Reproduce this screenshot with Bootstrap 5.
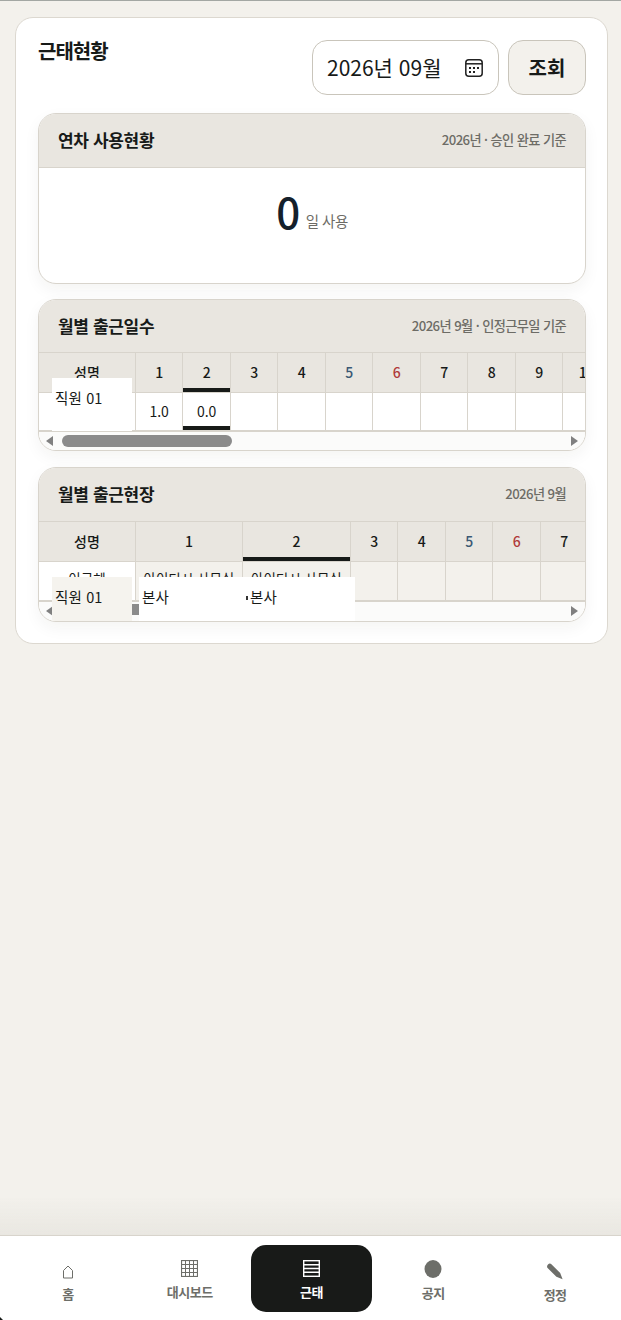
<!DOCTYPE html>
<html lang="ko"><head><meta charset="utf-8">
<link rel="stylesheet" href="https://cdn.jsdelivr.net/npm/bootstrap@5.3.0/dist/css/bootstrap.min.css">
<style>
html,body{height:100%}
body{font-family:"Noto Sans CJK KR","Noto Sans",sans-serif;background:#f3f1ec;color:#171a18;border-top:1px solid #a3a7a3;overflow:hidden;height:1320px;letter-spacing:-.03em}
.page-wrap{padding:16px 13px 0 15px}
.main-panel{background:#fff;border:1px solid #dcd8d0;border-radius:18px;padding:22px 21px 22px 22px;height:627px}
.top-row{height:55px;margin-bottom:18px}
.page-title{font-size:20px;font-weight:700;line-height:22px;margin:0;letter-spacing:-.05em}
.month-box{width:187px;height:55px;border:1px solid #c9c5bb;border-radius:15px;padding:0 15px 0 14px;font-size:21px;background:#fff;letter-spacing:0}
.search-btn{width:78px;height:55px;border:1px solid #c9c5bb;border-radius:15px;background:#f3f1ec;font-size:20px;font-weight:700;color:#171a18;padding:0;margin-left:9px}
.sub-card{position:relative;border:1px solid #d8d4cc;border-radius:18px;overflow:hidden;background:#fff;box-shadow:0 6px 16px rgba(40,35,20,.05);margin-bottom:15px}
.sub-card.gap-lg{margin-bottom:16px}
.sub-head{height:53.5px;background:#e9e6e0;padding:0 19px;border-bottom:1px solid #d8d4cc}
.sub-head.head-s{height:52.5px}
.sub-head.head-l{height:54px}
.sub-title{font-size:17px;font-weight:700;margin:0;letter-spacing:-.02em}
.sub-note{font-size:13.2px;font-weight:500;color:#6d6c66;letter-spacing:-.045em}
.leave-body{height:115.5px;padding-top:18px}
.big-num{font-size:42px;line-height:50px;font-weight:500;color:#14202b}
.big-unit{font-size:14.5px;color:#6d6c66;margin-left:6px;position:relative;top:-2px}
.grid-table{table-layout:fixed;border-collapse:collapse;margin:0;width:max-content;font-size:14px;letter-spacing:0}
.grid-table th,.grid-table td{border:1px solid #d8d4cc;text-align:center;vertical-align:middle;padding:0}
.grid-table th{height:39.5px}
.grid-table td{height:39px}
.grid-table td.row-s{height:38px}
.grid-table tr>:first-child{border-left:0}
.grid-table th{background:#e9e6e0;font-weight:500;border-top:0}
.grid-table .name-col{font-size:14px;font-weight:500;width:96.4px}
.w-day{width:47.5px}
.w-site{width:107px}
.w-site-b{width:108px}
.wk-sat{color:#3a5874}
.wk-sun{color:#b03a3a}
.today-head{box-shadow:inset 0 -4px 0 #171a18}
.today-cell{box-shadow:inset 0 -4px 0 #171a18}
.muted-cell{background:#f3f1ec}
.site-cell{font-size:13.5px;line-height:14px;overflow:hidden;padding-top:9px!important;white-space:nowrap;vertical-align:top!important}
.clip-wrap{overflow:hidden}
.fake-bar{height:20px;background:#fbfbfa;border-top:1px solid #d8d4cc;padding:0 7px}
.fake-bar.bar-short{height:19px}
.arrow-l,.arrow-r{width:0;height:0;border-top:5px solid transparent;border-bottom:5px solid transparent}
.arrow-l{border-right:7px solid #808080}
.arrow-r{border-left:7px solid #808080}
.bar-track{flex:1;padding:0 9px}
.bar-thumb{height:12px;border-radius:6px;background:#8b8b8b}
.mask{position:absolute;font-size:14.5px;color:#171a18;padding-left:3px;letter-spacing:.01em;line-height:20px}
.mask-one{left:13px;top:78px;width:80px;height:53px;background:#fff;padding-top:10px}
.mask-a{left:13px;top:109px;width:80px;height:45px;background:#f5f3ee;padding-top:10px}
.mask-t{left:93px;top:136px;width:7px;height:11px;background:#8b8b8b;padding:0}
.mask-b{left:100px;top:109px;width:108px;height:45px;background:#fff;padding-top:10px}
.mask-c{left:208px;top:109px;width:108px;height:45px;background:#fff;padding-top:10px}
.mask-dot{left:207px;top:128px;width:2px;height:4px;background:#333;padding:0}
.bottom-nav{position:fixed;left:0;right:0;bottom:0;height:85px;background:#fff;border-top:1px solid #d8d4cc;padding:9px 5px 8px 7px}
.nav-fade{position:fixed;left:0;right:0;bottom:85px;height:38px;background:linear-gradient(to bottom,rgba(233,231,225,0),#e9e7e1)}
.nav-cell{flex:1 1 0;color:#6d6e69;font-size:13px;font-weight:600;text-decoration:none;border-radius:15px;padding-top:3px}
.nav-cell.active-cell{background:#181a18;color:#fff}
.nav-low{padding-top:9px}
.nav-lbl{line-height:17px;margin-top:6px;letter-spacing:-.04em}
.corner-bit{position:fixed;left:0;bottom:0;width:3px;height:3px;background:#171a18;clip-path:polygon(0 0,100% 100%,0 100%)}
</style></head>
<body>
<div class="page-wrap">
<div class="main-panel">
  <div class="d-flex justify-content-between top-row">
    <h1 class="page-title">근태현황</h1>
    <div class="d-flex">
      <div class="month-box d-flex align-items-center justify-content-between">
        <span>2026년 09월</span>
        <svg width="18" height="18" viewBox="0 0 18 18" fill="none" stroke="#222" stroke-width="1.5"><rect x=".8" y=".8" width="16.4" height="16.4" rx="3"/><path d="M.8 4.8h16.4"/><g fill="#222" stroke="none"><rect x="4" y="8" width="2" height="2"/><rect x="8" y="8" width="2" height="2"/><rect x="12" y="8" width="2" height="2"/><rect x="4" y="12" width="2" height="2"/><rect x="8" y="12" width="2" height="2"/></g></svg>
      </div>
      <button class="search-btn" type="button">조회</button>
    </div>
  </div>

  <div class="sub-card">
    <div class="sub-head d-flex justify-content-between align-items-center">
      <h2 class="sub-title">연차 사용현황</h2><span class="sub-note">2026년 · 승인 완료 기준</span>
    </div>
    <div class="leave-body text-center"><span class="big-num">0</span><span class="big-unit">일 사용</span></div>
  </div>

  <div class="sub-card gap-lg">
    <div class="sub-head head-s d-flex justify-content-between align-items-center">
      <h2 class="sub-title">월별 출근일수</h2><span class="sub-note">2026년 9월 · 인정근무일 기준</span>
    </div>
    <div class="clip-wrap">
    <table class="grid-table"><thead><tr>
      <th class="name-col">성명</th><th class="w-day">1</th><th class="w-day today-head">2</th><th class="w-day">3</th><th class="w-day">4</th><th class="w-day wk-sat">5</th><th class="w-day wk-sun">6</th><th class="w-day">7</th><th class="w-day">8</th><th class="w-day">9</th><th class="w-day">10</th><th class="w-day">11</th>
    </tr></thead><tbody><tr>
      <td class="row-s"></td><td class="row-s">1.0</td><td class="row-s today-cell">0.0</td><td class="row-s"></td><td class="row-s"></td><td class="row-s"></td><td class="row-s"></td><td class="row-s"></td><td class="row-s"></td><td class="row-s"></td><td class="row-s"></td><td class="row-s"></td>
    </tr></tbody></table>
    </div>
    <div class="fake-bar bar-short d-flex align-items-center"><span class="arrow-l"></span><div class="bar-track"><div class="bar-thumb" style="width:170px"></div></div><span class="arrow-r"></span></div>
    <div class="mask mask-one">직원 01</div>
  </div>

  <div class="sub-card mb-0">
    <div class="sub-head head-l d-flex justify-content-between align-items-center">
      <h2 class="sub-title">월별 출근현장</h2><span class="sub-note">2026년 9월</span>
    </div>
    <div class="clip-wrap">
    <table class="grid-table"><thead><tr>
      <th class="name-col">성명</th><th class="w-site">1</th><th class="w-site-b today-head">2</th><th class="w-day">3</th><th class="w-day">4</th><th class="w-day wk-sat">5</th><th class="w-day wk-sun">6</th><th class="w-day">7</th>
    </tr></thead><tbody><tr>
      <td class="site-cell">이근혜</td><td class="site-cell muted-cell">아이티시 사무실</td><td class="site-cell muted-cell">아이티시 사무실</td><td class="muted-cell"></td><td class="muted-cell"></td><td class="muted-cell"></td><td class="muted-cell"></td><td class="muted-cell"></td>
    </tr></tbody></table>
    </div>
    <div class="fake-bar d-flex align-items-center"><span class="arrow-l"></span><div class="bar-track"></div><span class="arrow-r"></span></div>
    <div class="mask mask-a">직원 01</div><div class="mask mask-t"></div><div class="mask mask-b">본사</div><div class="mask mask-c">본사</div><i class="mask mask-dot"></i>
  </div>
</div>
</div>
<div class="nav-fade"></div>
<nav class="bottom-nav d-flex">
  <a class="nav-cell nav-low d-flex flex-column align-items-center justify-content-center" href="#">
    <svg width="12" height="14" viewBox="0 0 12 14" fill="none" stroke="#6d6e69" stroke-width="1"><path d="M1.5 13V5.5L6 1l4.500 4.500V13z"/></svg>
    <span class="nav-lbl">홈</span></a>
  <a class="nav-cell d-flex flex-column align-items-center justify-content-center" href="#">
    <svg width="17" height="17" viewBox="0 0 17 17" fill="none" stroke="#6d6e69" stroke-width="1"><rect x=".5" y=".5" width="16" height="16" stroke-width="1.2"/><path d="M.5 4.500h16M.5 8.500h16M.5 12.500h16M4.500.5v16M8.500.5v16M12.500.5v16"/></svg>
    <span class="nav-lbl">대시보드</span></a>
  <a class="nav-cell active-cell d-flex flex-column align-items-center justify-content-center" href="#">
    <svg width="17" height="17" viewBox="0 0 17 17" fill="none" stroke="#fff" stroke-width="1.4"><rect x=".7" y=".7" width="15.6" height="15.6"/><path d="M.7 4.700h15.600M.7 8.500h15.600M.7 12.300h15.600"/></svg>
    <span class="nav-lbl">근태</span></a>
  <a class="nav-cell d-flex flex-column align-items-center justify-content-center" href="#">
    <svg width="18" height="18" viewBox="0 0 18 18"><ellipse cx="9" cy="9" rx="8.5" ry="9" fill="#6d6e69"/></svg>
    <span class="nav-lbl">공지</span></a>
  <a class="nav-cell nav-low d-flex flex-column align-items-center justify-content-center" href="#">
    <svg width="18" height="17" viewBox="0 0 18 17" fill="#6d6e69"><path d="M2.2 1.2C3.2.2 4.500.3 5.400 1.200L14.200 10l2.400 6.200-6.200-2.400L1.600 5C.7 4.100.9 2.500 2.200 1.200z"/></svg>
    <span class="nav-lbl">정정</span></a>
</nav>
<span class="corner-bit"></span>
<script src="https://cdn.jsdelivr.net/npm/bootstrap@5.3.0/dist/js/bootstrap.bundle.min.js"></script>
</body></html>
